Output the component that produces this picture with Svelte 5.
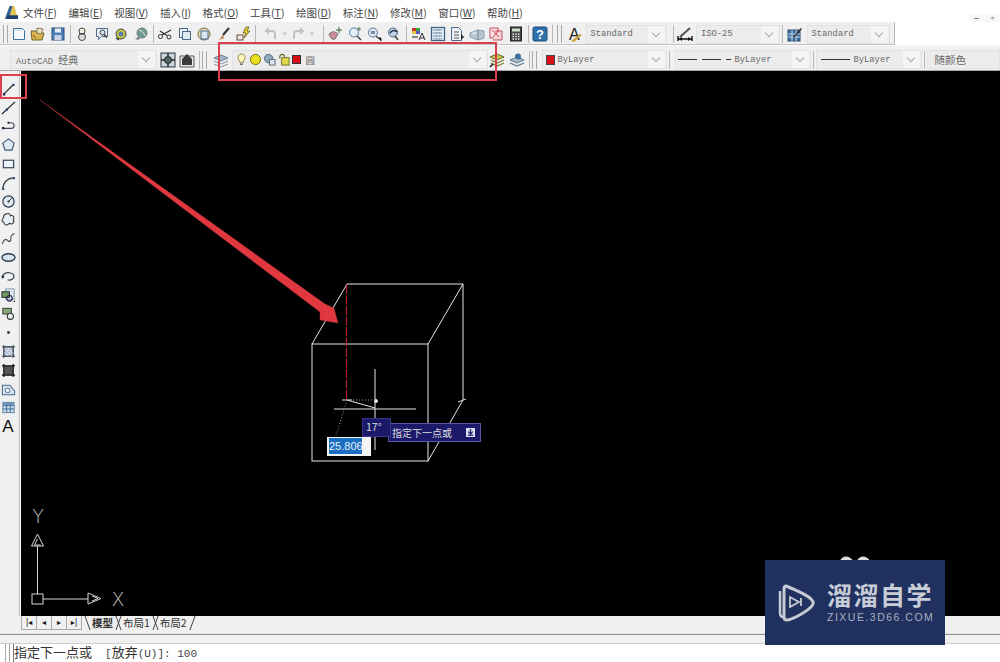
<script>
  const menus = [['文件','F'],['编辑','E'],['视图','V'],['插入','I'],['格式','O'],['工具','T'],['绘图','D'],['标注','N'],['修改','M'],['窗口','W'],['帮助','H']];
  const I = {
    newf:'<path d="M2.5 2.5h9l2 2v9h-11z" fill="#f4f8fc" stroke="#3f6f9f"/><path d="M4 4h7" stroke="#b9d2e8"/>',
    open:'<path d="M1 5h5l1 2h7l-2 7H2z" fill="#d9b44e" stroke="#76622a"/><path d="M7 2l6 1-2 5-4-1z" fill="#efe7c4" stroke="#8a7a50"/><path d="M3 9l3 3" stroke="#7a4a20"/>',
    save:'<rect x="2" y="2" width="12" height="12" fill="#4e7fb5" stroke="#2b4f7c"/><rect x="5" y="2.5" width="6" height="4" fill="#e8eef5"/><rect x="4.500" y="9" width="7" height="5" fill="#c6d5e6"/>',
    plot:'<circle cx="8" cy="5" r="3" fill="#f0eee0" stroke="#444"/><circle cx="8" cy="11" r="3.500" fill="#ddd" stroke="#444"/><path d="M5 8h6" stroke="#444"/>',
    prev:'<path d="M2.500 2.500h11v8h-6l-3 3v-3h-2z" fill="#eef3f8" stroke="#4a6a8c"/><circle cx="8.500" cy="6.500" r="2.500" fill="#cfe0ee" stroke="#444"/><path d="M10 8.500l3 3" stroke="#333" stroke-width="1.500"/>',
    pub:'<circle cx="8" cy="8" r="5" fill="#c9c83f" stroke="#444"/><circle cx="8" cy="8" r="2.500" fill="#5b7fb0"/><path d="M3 12l3 2" stroke="#333" stroke-width="1.500"/>',
    d3:'<circle cx="9" cy="7" r="5" fill="#6f9a92" stroke="#6a7f80"/><path d="M6 4c3 1 5 3 6 6" stroke="#dfe9e6" fill="none"/><path d="M2 13c2-2 3-2 5-2l-1 3z" fill="#888"/>',
    cut:'<circle cx="3.500" cy="10.500" r="2" fill="none" stroke="#333"/><circle cx="12" cy="11" r="2" fill="none" stroke="#333"/><path d="M5 9l9-5M10 9.500L3 5" stroke="#333" stroke-width="1.200"/>',
    copy:'<rect x="2.500" y="2.500" width="8" height="9" fill="#eef3f8" stroke="#4a6a8c"/><rect x="5.500" y="5.500" width="8" height="8" fill="#dfe9f2" stroke="#4a6a8c"/>',
    paste:'<circle cx="8" cy="8" r="6" fill="#e8dcae" stroke="#6f6a45"/><rect x="5" y="5" width="7" height="8" fill="#dbe7f0" stroke="#4a6a8c"/>',
    brush:'<path d="M13 2L7 9" stroke="#333" stroke-width="2"/><path d="M7 9l-4 5 5-2z" fill="#c9743c"/>',
    match:'<rect x="2" y="9" width="6" height="5" fill="#e8eaf0" stroke="#7a4a30"/><path d="M11 1l-3 6h3l-2 5 6-7h-3l2-4z" fill="#e8cf3a" stroke="#554a10" stroke-width=".7"/>',
    undo:'<path d="M12 13V8a3 3 0 0 0-3-3H4" fill="none" stroke="#c2c2c2" stroke-width="2"/><path d="M6 1L1.500 5 6 9z" fill="#c2c2c2"/>',
    redo:'<path d="M4 13V8a3 3 0 0 1 3-3h5" fill="none" stroke="#c2c2c2" stroke-width="2"/><path d="M10 1l4.500 4L10 9z" fill="#c2c2c2"/>',
    pan:'<path d="M2 8c3-3 6-3 9 0l-3 5c-3 1-5-1-6-5z" fill="#c98c9c" stroke="#776"/><path d="M12 1v6M9 4h6" stroke="#3b6a3b"/>',
    zrt:'<circle cx="7" cy="6.500" r="4.500" fill="#e4eff8" stroke="#57799a"/><path d="M10 10l4 4" stroke="#444" stroke-width="1.500"/><path d="M12 1v4M10 3h4" stroke="#4a7a4a"/>',
    zw:'<circle cx="7" cy="6.500" r="4.500" fill="#dce8f2" stroke="#57799a"/><rect x="5" y="5" width="4" height="3" fill="#7a8a9a"/><path d="M10 10l2 2" stroke="#444" stroke-width="1.500"/><path d="M12 12h3v3" stroke="#222"/>',
    zp:'<circle cx="7" cy="6.500" r="4.500" fill="#bcd2e6" stroke="#456a8a"/><path d="M4 7c2-3 5-3 7-1" stroke="#223" fill="none" stroke-width="1.500"/><path d="M9 10l3 4" stroke="#444" stroke-width="1.500"/>',
    props:'<rect x="2" y="2" width="4" height="3" fill="#c33"/><rect x="6" y="2" width="4" height="3" fill="#3a3"/><rect x="2" y="5" width="4" height="3" fill="#e3c93a"/><rect x="6" y="5" width="4" height="3" fill="#55c"/><path d="M9 14l3-7 3 7M10 12h4" stroke="#333" fill="none"/><path d="M2 11h6" stroke="#888" stroke-width="2"/>',
    grid:'<rect x="1.500" y="1.500" width="13" height="13" fill="#e8f0f6" stroke="#3f6485" stroke-width="1.300"/><path d="M5 4h7M5 7h7M5 10h7M5 13h7M4 3v10M7 3v10M10 3v10" stroke="#6a8aa8" stroke-dasharray="2 1"/>',
    doc:'<path d="M2.500 1.500h7l3 3v10h-10z" fill="#eef3f8" stroke="#4a6a8c"/><path d="M5 6h5M5 9h5M5 12h5" stroke="#555"/><path d="M12 8l3 3-3 3z" fill="#223"/>',
    sheet:'<path d="M1 7l8-3 6 1v7l-6 2-8-3z" fill="#b6c6d2" stroke="#8aa0b0"/><path d="M9 4v10" stroke="#6a8294"/><path d="M3 8l5-2" stroke="#dfe8ee" stroke-width="1.500"/>',
    mark:'<rect x="2" y="2" width="8" height="10" fill="#f7e6e6" stroke="#c64d5c"/><path d="M7 5h7v9H5" fill="#f2d6d6" stroke="#c64d5c"/><path d="M4 4l7 7M11 4l-6 7" stroke="#d9394a"/>',
    calc:'<rect x="2.500" y="1" width="11" height="14" fill="#444" stroke="#222"/><rect x="4" y="2.500" width="8" height="3" fill="#cfe0cc"/><path d="M4.500 8h7M4.500 10.500h7M4.500 13h7" stroke="#eee" stroke-dasharray="1.500 1.200" stroke-width="1.300"/>',
    help:'<rect x="1" y="1" width="14" height="14" rx="1.500" fill="#2f6fae" stroke="#1e4a78"/><text x="8" y="13" font-size="13" font-weight="700" text-anchor="middle" fill="#fff" font-family="Liberation Sans">?</text>'
  };
  const g1 = [
    [I.newf,I.open,I.save],
    [I.plot,I.prev,I.pub,I.d3],
    [I.cut,I.copy,I.paste,I.brush,I.match]
  ];
  const g2 = [
    [I.pan,I.zrt,I.zw,I.zp],
    [I.props,I.grid,I.doc,I.sheet,I.mark,I.calc],
    [I.help]
  ];
  const leftIcons = [
    '<path d="M3 14L13 4" stroke="#222" stroke-width="1.200"/><rect x="2" y="13" width="2.500" height="2.500" fill="#224"/><rect x="12" y="3" width="2.500" height="2.500" fill="#334f77"/>',
    '<path d="M1 15L15 2" stroke="#222" stroke-width="1.300"/><rect x="5" y="9" width="2.500" height="2.500" fill="#334f77"/>',
    '<path d="M2 11h9c4 0 4-6 0-6H8" fill="none" stroke="#446" stroke-width="1.200"/><path d="M1 9.500h2.500V12H1zM7 4h2v2H7z" fill="#223"/>',
    '<path d="M8 2l6 4.500-2.300 7.500H4.300L2 6.500z" fill="#dfe9f2" stroke="#3a5674" stroke-width="1.200"/>',
    '<rect x="2.500" y="4.500" width="11" height="8" fill="#eef3f8" stroke="#2f3f52" stroke-width="1.200"/>',
    '<path d="M2 15C2 8 7 3 14 3" fill="none" stroke="#333" stroke-width="1.300"/><path d="M1 13.500h2.500V16H1zM12.500 2H15v2.500h-2.500z" fill="#3a5674"/>',
    '<circle cx="8" cy="8" r="6" fill="#dfe9f2" stroke="#2f3f52" stroke-width="1.300"/><path d="M8 8l4-4" stroke="#333"/><circle cx="8" cy="8" r="1.200" fill="#333"/>',
    '<path d="M6 2c2-1 4 0 4 2 3-1 5 2 3 4 2 3-1 6-4 4-2 3-6 2-6-1-3-1-2-4 0-5-1-2 1-4 3-4z" fill="#e8eef5" stroke="#333" stroke-width="1.100"/>',
    '<path d="M1.500 14c1-5 4-6 5.500-4s4 1 3.500-2 2-5 4-5" fill="none" stroke="#444" stroke-width="1.100"/>',
    '<ellipse cx="8" cy="8" rx="7" ry="4" fill="#d8e4ef" stroke="#2f3f52" stroke-width="1.400"/>',
    '<path d="M2.500 10C0 6 5 3.500 9 4c4 .5 6 3 4 6-1 1.500-4 2.500-6 1.500" fill="none" stroke="#384a5c" stroke-width="1.300"/><path d="M4 7l-2 3-2-2" fill="#223"/>',
    '<rect x="5" y="1" width="9" height="11" fill="#dfe9f2" stroke="#7a93ab"/><rect x="1" y="4" width="8" height="6" fill="#6f9b5f" stroke="#223"/><circle cx="9" cy="11" r="3" fill="none" stroke="#224" stroke-width="1.200"/><path d="M13 15l2-2v2z" fill="#111"/>',
    '<rect x="2" y="2.500" width="9" height="6" fill="#8aa777" stroke="#333"/><circle cx="10" cy="11" r="3.300" fill="#eef3f8" stroke="#333" stroke-width="1.200"/>',
    '<circle cx="8" cy="8" r="1.500" fill="#334"/>',
    '<rect x="3" y="3" width="10" height="10" fill="#b4c2d0" stroke="#333"/><path d="M1 3h14M1 13h14M3 1v14M13 1v14" stroke="#3a4d62" stroke-width="1"/><path d="M4 5l8 8M4 9l4 4M7 4l6 6" stroke="#eef"/>',
    '<rect x="3" y="3" width="10" height="10" fill="#555"/><path d="M1 3h14M1 13h14M3 1v14M13 1v14" stroke="#111" stroke-width="1.300"/>',
    '<path d="M1.500 3.500h8l5 6v4h-13z" fill="#d6e3ee" stroke="#4a6a8c" stroke-width="1.100"/><circle cx="7" cy="9" r="2.500" fill="#f3f6f9" stroke="#4a6a8c"/>',
    '<rect x="2" y="2.500" width="12" height="11" fill="#c8dbeb" stroke="#5c7ea0"/><path d="M2 6h12M2 9.500h12M6 3v10M10 3v10" stroke="#3e6a96"/><rect x="2.500" y="3" width="11" height="2.500" fill="#6d93bb"/>'
  ];
</script>

<div class="page">
  <header>
    <div class="menubar">
      <svg class="logo" viewBox="0 0 16 16"><path d="M1 15L6 1h5l4 14z" fill="#e4c44e"/><path d="M1 15L6 1h3L5 15z" fill="#2f5f9c"/><path d="M4 11h11v4H3z" fill="#1f3f70"/></svg>
      <nav>
        {#each menus as m}<span>{m[0]}(<u>{m[1]}</u>)</span>{/each}
      </nav>
      <div class="winbtns"><span>–</span><span>▫</span></div>
    </div>

    <div class="toolbar one">
      <i class="grip"></i>
      {#each g1 as g}
        <div class="group">
          {#each g as ic}<span class="btn"><svg viewBox="0 0 16 16">{@html ic}</svg></span>{/each}
        </div>
        <i class="sep"></i>
      {/each}
      <div class="history">
        <span class="btn"><svg viewBox="0 0 16 16">{@html I.undo}</svg></span><b>▾</b>
        <span class="btn"><svg viewBox="0 0 16 16">{@html I.redo}</svg></span><b>▾</b>
      </div>
      <i class="sep"></i>
      {#each g2 as g}
        <div class="group">
          {#each g as ic}<span class="btn"><svg viewBox="0 0 16 16">{@html ic}</svg></span>{/each}
        </div>
        <i class="sep"></i>
      {/each}
      <i class="grip gap"></i>
      <span class="btn"><svg viewBox="0 0 16 16"><text x="1" y="14" font-size="16" font-family="Liberation Sans" fill="#222">A</text><path d="M3 15l9-7 2 1-8 7z" fill="#c9a63c"/></svg></span>
      <div class="combo w81"><span>Standard</span><em></em></div>
      <i class="sep"></i>
      <span class="btn"><svg viewBox="0 0 16 16"><path d="M1 13h14M1 10v5M15 10v5" stroke="#111" stroke-width="1.400"/><path d="M3 11l10-9" stroke="#555" stroke-width="2"/><path d="M2 13l3-2v4zM14 13l-3-2v4z" fill="#111"/></svg></span>
      <div class="combo w84"><span>ISO-25</span><em></em></div>
      <i class="sep"></i>
      <span class="btn"><svg viewBox="0 0 16 16"><rect x="1" y="4" width="12" height="11" fill="#3f6f9f" stroke="#27486b"/><path d="M1 8h12M1 11h12M5 4v11M9 4v11" stroke="#c4d7e8"/><path d="M6 11l8-9 1 1-8 9z" fill="#333"/></svg></span>
      <div class="combo w83"><span>Standard</span><em></em></div>
    </div>

    <div class="toolbar two">
      <div class="combo w147"><span>AutoCAD <span class="cn">经典</span></span><em></em></div>
      <span class="btn"><svg viewBox="0 0 16 16"><rect x="1" y="1" width="14" height="14" fill="#c8d4dc" stroke="#333"/><circle cx="8" cy="8" r="3.500" fill="#566" stroke="#222"/><path d="M8 1v3M8 12v3M1 8h3M12 8h3" stroke="#222" stroke-width="1.500"/></svg></span>
      <span class="btn"><svg viewBox="0 0 16 16"><path d="M1 15V4h14v11z" fill="#e6e8ea" stroke="#555"/><path d="M8 2l5 5v6H3V7z" fill="#3b3b3b"/></svg></span>
      <i class="sep"></i><i class="grip"></i>
      <span class="btn layer"><svg viewBox="0 0 16 16"><path d="M8 3l7 3-7 3-7-3z" fill="#9db4c6" stroke="#6c8498"/><path d="M1 9l7 3 7-3M1 12l7 3 7-3" fill="none" stroke="#7d93a5"/></svg></span>
      <div class="combo layerbox">
        <svg class="s" viewBox="0 0 14 14"><path d="M7 1a4 4 0 0 1 2.500 7L9 10H5l-.5-2A4 4 0 0 1 7 1z" fill="#fff6b8" stroke="#8a8350"/><path d="M5.500 12h3" stroke="#555" stroke-width="1.500"/></svg>
        <svg class="s" viewBox="0 0 14 14"><circle cx="7" cy="7" r="5.500" fill="#e8e020" stroke="#6e6a10"/></svg>
        <svg class="s" viewBox="0 0 14 14"><circle cx="6" cy="6" r="4.500" fill="#8ea8bc" stroke="#54687a"/><rect x="7" y="7" width="6" height="6" fill="#d9e4ec" stroke="#54687a"/></svg>
        <svg class="s" viewBox="0 0 14 14"><path d="M3 6V4a2.500 2.500 0 0 1 5 0" fill="none" stroke="#6a6a2c" stroke-width="1.300"/><rect x="5" y="5" width="8" height="8" fill="#e3d94e" stroke="#6a6a2c"/></svg>
        <i class="red"></i>
        <span class="cjk">圆</span>
        <em></em>
      </div>
      <span class="btn"><svg viewBox="0 0 16 16"><path d="M8 2l7 3-7 3-7-3z" fill="#c7c24a" stroke="#6a6a2c"/><path d="M2 8l6 3 7-3M2 11l6 3 7-3" fill="none" stroke="#777a2c" stroke-width="1.300"/><path d="M1 15l3-3" stroke="#111" stroke-width="1.500"/></svg></span>
      <span class="btn"><svg viewBox="0 0 16 16"><path d="M8 5l7 3-7 3-7-3z" fill="#a9bccb" stroke="#5e7a90"/><path d="M1 11l7 3 7-3" fill="none" stroke="#5e7a90" stroke-width="1.300"/><circle cx="9" cy="4.500" r="3" fill="#3f6f9f"/></svg></span>
      <i class="sep"></i><i class="grip"></i>
      <div class="combo w125"><i class="red2"></i><span>ByLayer</span><em></em></div>
      <i class="sep"></i>
      <div class="combo w136"><u class="dash"></u><u class="dash"></u><u class="dash short"></u><span>ByLayer</span><em></em></div>
      <i class="sep"></i>
      <div class="combo w106"><u class="solid"></u><span>ByLayer</span><em></em></div>
      <i class="sep"></i>
      <div class="combo grow"><span class="cjk big">随颜色</span></div>
    </div>
  </header>

  <main>
    <aside>
      {#each leftIcons as ic}
        <span class="lbtn"><svg viewBox="0 0 16 16">{@html ic}</svg></span>
      {/each}
      <span class="lbtn text">A</span>
    </aside>

    <section class="canvas">
      <svg class="draw" viewBox="21 71 979 545" width="979" height="545">
        <g stroke="#e6e6e6" stroke-width="1" fill="none">
          <rect x="312" y="344" width="116" height="117"/>
          <path d="M312 344L347 284H463L428 344M463 284V400L428 461"/>
          <path d="M334 409H416M375 369V450"/>
          <path d="M347 400L375 408"/>
          <path d="M342 400h10M458 402l8-3"/>
          <circle cx="376" cy="401" r="1.500" fill="#eee"/>
        </g>
        <path d="M347 400H375M347 400L334 442" stroke="#999" stroke-dasharray="1 2" fill="none"/>
        <path d="M346.500 285V400" stroke="#b3202c" stroke-width="1.200" stroke-dasharray="9 1.500"/>
        <path d="M40 100L325 304L334 308L338 323L320 320L320 312Z" fill="#e1373e" stroke="#a8343a" stroke-width=".4"/>
        <g stroke="#d8d8d8" fill="none">
          <rect x="32" y="594" width="11" height="10"/>
          <path d="M43 599H88M37.500 594V546"/>
          <path d="M88 593L101 598.500L88 604ZM92 596L98 598.500L92 601" />
          <path d="M37.500 534L31.500 546H43.500ZM37.500 539L34.500 545H40.500"/>
        </g>
        <text class="axis" x="38" y="523">Y</text>
        <text class="axis" x="118" y="606">X</text>
        <path d="M840 561c2-6 10-6 13 0zM857 561c2-6 10-6 13 0z" fill="#ddd"/>
      </svg>

      <div class="angle">17°</div>
      <div class="prompt"><span>指定下一点或</span><svg viewBox="0 0 10 10"><rect width="10" height="10" fill="#dde"/><path d="M5 1v5M2.500 4L5 6.500 7.500 4M2 8h6" stroke="#1b1b6e" fill="none" stroke-width="1.400"/></svg></div>
      <div class="input"><span>25.806</span></div>
    </section>
  </main>

  <div class="tabs">
    <div class="nav">
      <span>|◂</span><span>◂</span><span>▸</span><span>▸|</span>
    </div>
    <span class="tab on">模型</span>
    <span class="tab">布局1</span>
    <span class="tab">布局2</span>
  </div>

  <footer>
    <i class="grip"></i>
    <div class="cmd"><span class="cj">指定下一点或</span><span class="gapx">[</span><span class="cj">放弃</span>(U)]: 100</div>
  </footer>

  <i class="hl layerhl"></i>
  <i class="hl toolhl"></i>
  <div class="brand">
    <svg viewBox="0 0 44 44"><path d="M8 11v22c0 3 2 5 5 4" fill="none" stroke="#c6cad3" stroke-width="2.500"/><path d="M14 6c0 0 20 8 25 13 3 3 3 5 0 8-6 6-20 13-24 13-2 0-3-1-3-3V9c0-2 1-3 2-3z" fill="none" stroke="#c6cad3" stroke-width="3"/><path d="M18 17l9 5-9 5z" fill="none" stroke="#c6cad3" stroke-width="1.800"/><path d="M29 18v8" stroke="#c6cad3" stroke-width="1.800"/></svg>
    <div class="wm">
      <strong>溜溜自学</strong>
      <small>ZIXUE.3D66.COM</small>
    </div>
  </div>
</div>

<style>
  :global(body) { margin: 0; background: #fff; }
  .page {
    position: relative;
    width: 1000px;
    height: 662px;
    overflow: hidden;
    display: flex;
    flex-direction: column;
    font-family: "Liberation Sans", "Noto Sans CJK SC", sans-serif;
    background: #fff;
  }
  header { display: flex; flex-direction: column; flex: none; }
  .menubar {
    height: 22px;
    display: flex;
    align-items: center;
    padding-left: 4px;
    background: #fff;
    box-sizing: border-box;
  }
  .logo { width: 15px; height: 15px; margin-top: 2px; flex: none; }
  nav {
    display: flex;
    gap: 11.500px;
    margin-left: 4px;
    padding-top: 3px;
    font-size: 10.500px;
    color: #444;
    font-family: "Noto Sans CJK SC", sans-serif;
    white-space: nowrap;
  }
  .winbtns { margin-left: auto; display: flex; gap: 1px; margin-top: 14px; height: 8px; overflow: hidden; }
  .winbtns span { width: 15px; font-size: 9px; line-height: 8px; text-align: center; color: #444; background: #f7f7f7; }

  .toolbar { display: flex; align-items: center; box-sizing: border-box; background: #f0f0f0; flex: none; }
  .one {
    height: 23px;
    width: 895px;
    padding: 2px 0 0 3px;
    border-right: 1px solid #b9b9b9;
    border-bottom: 1px solid #c4c4c4;
  }
  .two {
    height: 26px;
    padding: 3px 0 0 10px;
    border-top: 1px solid #fafafa;
    border-bottom: 1px solid #a8a8a8;
  }
  .grip { width: 3px; height: 18px; flex: none; border-left: 1px solid #a8a8a8; border-right: 1px solid #a8a8a8; margin-right: 1px; }
  .grip.gap { margin: 0 4px 0 2px; }
  .sep { width: 1px; height: 18px; background: #b8b8b8; margin: 0 2px; flex: none; }
  .group { display: flex; }
  .btn { width: 19.500px; height: 18px; display: flex; align-items: center; justify-content: center; flex: none; }
  .btn svg { width: 16px; height: 16px; display: block; }
  .btn.layer { margin: 0 0 0 3px; }
  .history { display: flex; align-items: center; width: 59.500px; margin-left: 3px; }
  .history b { width: 8px; font-size: 7px; font-weight: 400; color: #c2c2c2; text-align: center; }

  .combo {
    height: 19px;
    box-sizing: border-box;
    display: flex;
    align-items: center;
    padding-left: 4px;
    background: #ececec;
    border: 1px solid #e2e2e2;
    color: #6a6a6a;
    font: 8.800px "Liberation Mono", "Noto Sans CJK SC", monospace;
    flex: none;
    position: relative;
    white-space: nowrap;
  }
  .combo em {
    position: absolute;
    right: 1px; top: 0; bottom: 0;
    width: 17px;
    background: #f4f4f4;
  }
  .combo em::after {
    content: '';
    position: absolute;
    left: 5px; top: 4px;
    width: 5px; height: 5px;
    border-right: 1px solid #a8a8a8;
    border-bottom: 1px solid #a8a8a8;
    transform: rotate(45deg);
  }
  .w81 { width: 81px; margin: 0 4px 0 0; }
  .w84 { width: 84px; margin-left: 1px; }
  .w83 { width: 83px; margin-left: 2px; }
  .w147 { width: 147px; padding-left: 5px; margin-right: 1px; }
  .cn { font: 10px "Noto Sans CJK SC", sans-serif; }
  .w125 { width: 125px; padding-left: 3px; margin-left: 4px; }
  .w136 { width: 136px; padding-left: 2px; margin-left: 3px; }
  .w106 { width: 106px; padding-left: 4px; }
  .grow { flex: 1; }
  .layerbox { width: 256px; gap: 1px; padding-left: 2px; margin-left: 1px; }
  .layerbox .s { width: 13px; height: 13px; flex: none; }
  .red { width: 9px; height: 9px; background: #d80f14; border: 1px solid #333; box-sizing: border-box; flex: none; margin-left: 1px; }
  .red2 { width: 9px; height: 10px; background: #d80f14; border: 1px solid #444; box-sizing: border-box; flex: none; margin-right: 3px; }
  .cjk { font-family: "Noto Sans CJK SC", sans-serif; font-size: 9.500px; color: #666; margin-left: 4px; }
  .cjk.big { font-size: 10.500px; margin-left: 3px; color: #666; }
  .dash { display: block; width: 19px; height: 1px; background: #333; margin-right: 5px; flex: none; }
  .dash.short { width: 5px; margin-right: 4px; }
  .solid { display: block; width: 29px; height: 1px; background: #333; margin-right: 4px; flex: none; }

  main { display: flex; height: 545px; flex: none; }
  aside {
    width: 20px;
    box-sizing: border-box;
    background: #f0f0f0;
    border-right: 1px solid #bdbdbd;
    display: flex;
    flex-direction: column;
    align-items: center;
    padding: 8px 3px 0 0;
    flex: none;
    margin-right: 1px;
  }
  .lbtn { height: 18.800px; width: 16px; display: flex; align-items: center; justify-content: center; flex: none; }
  .lbtn svg { width: 15px; height: 15px; display: block; }
  .lbtn.text { font: 17px "Liberation Sans", sans-serif; color: #111; height: 20px; }

  .canvas { position: relative; flex: 1; background: #000; }
  .draw { display: block; }
  .axis { font: 19px "DejaVu Sans", sans-serif; font-weight: 200; fill: #c8c8c8; text-anchor: middle; opacity: .95; }

  .angle, .prompt, .input { position: absolute; box-sizing: border-box; font-family: "Noto Sans CJK SC", sans-serif; }
  .angle {
    left: 341px; top: 347px;
    width: 29px; height: 19px;
    background: #1b1a6a;
    border: 1px solid #35358a;
    color: #ddd;
    font-size: 10.500px;
    line-height: 16px;
    padding-left: 3px;
    z-index: 2;
  }
  .prompt {
    left: 367px; top: 352px;
    width: 93px; height: 19px;
    background: #1b1a6a;
    border: 1px solid #5656a0;
    color: #ddd;
    font-size: 10px;
    display: flex;
    align-items: center;
    padding-left: 3px;
    z-index: 1;
  }
  .prompt svg { width: 9px; height: 9px; margin-left: auto; margin-right: 5px; }
  .input {
    left: 306px; top: 366px;
    width: 44px; height: 19px;
    background: #f4f4f4;
    padding: 1px 0 0 2px;
    z-index: 3;
  }
  .input span {
    display: block;
    width: 33px; height: 16px;
    background: #1b6ec0;
    color: #e8eef6;
    font: 11px/16px "Liberation Sans", sans-serif;
  }
  .hl { position: absolute; box-sizing: border-box; border: 2px solid #d8404c; display: block; }
  .layerhl { left: 218px; top: 42px; width: 279px; height: 39px; }
  .toolhl { left: 0; top: 74px; width: 27px; height: 25px; }

  .tabs {
    height: 17px;
    box-sizing: border-box;
    flex: none;
    display: flex;
    align-items: flex-start;
    padding-left: 21px;
    background: #f0f0f0;
    border-bottom: 2px solid #f0f0f0;
    font: 10.500px "Noto Sans CJK SC", sans-serif;
    color: #333;
  }
  .nav { display: flex; width: 61px; height: 14px; border: 1px solid #aaa; border-top: 0; box-sizing: border-box; flex: none; }
  .nav span { flex: 1; text-align: center; font: 8px/13px "DejaVu Sans", sans-serif; color: #111; border-right: 1px solid #aaa; }
  .nav span:last-child { border: 0; }
  .tab { position: relative; margin-left: 8px; line-height: 13px; padding: 0 1px; white-space: nowrap; }
  .tab::before, .tab::after { content: ''; position: absolute; top: 0; height: 14px; width: 0; border-left: 1px solid #444; }
  .tab::before { left: -4px; transform: skewX(20deg); }
  .tab::after { right: -5px; transform: skewX(-20deg); }
  .tab.on { font-weight: 700; background: #e8e8e8; margin-left: 9px; }

  footer {
    flex: 1;
    display: flex;
    align-items: flex-end;
    background: linear-gradient(#8e8e8e 0 1px, #f0f0f0 1px 9px, #cfcfcf 9px 10px, #fff 10px);
    border-top: 1px solid #e6e6e6;
  }
  footer .grip { height: 18px; margin-left: 5px; margin-right: 3px; }
  .cmd {
    flex: 1;
    height: 18px;
    box-sizing: border-box;
    font: 11px/15px "Liberation Mono", monospace;
    color: #444;
    border-left: 1px solid #777;
    white-space: pre;
  }
  .cj { font: 13px/15px "Noto Sans CJK SC", sans-serif; color: #333; }
  .gapx { margin-left: 13px; }

  .brand {
    position: absolute;
    left: 765px; top: 560px;
    width: 180px; height: 85px;
    background: #20315f;
    display: flex;
    align-items: center;
    box-sizing: border-box;
    padding: 0 0 2px 7px;
    gap: 11px;
  }
  .brand svg { width: 44px; height: 44px; flex: none; }
  .wm { display: flex; flex-direction: column; color: #c8ccd6; }
  .wm strong { font: 700 25px/28px "Noto Sans CJK SC", sans-serif; letter-spacing: 1.500px; white-space: nowrap; }
  .wm small { font: 10.500px/12px "Liberation Sans", sans-serif; letter-spacing: 1.500px; color: #aab0c0; white-space: nowrap; margin-top: 3px; }
</style>
